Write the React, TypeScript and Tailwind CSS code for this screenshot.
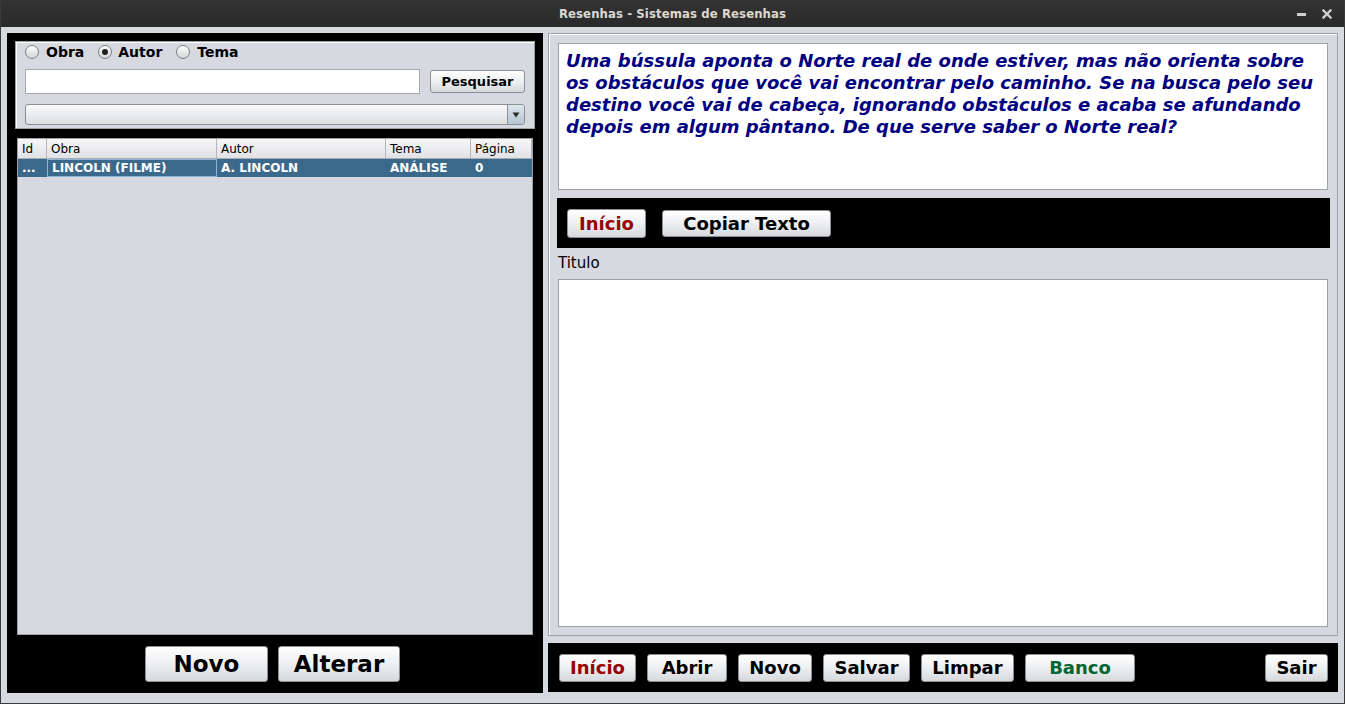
import React from "react";

const btn =
  "flex items-center justify-center rounded-[3px] border border-[#8c8f94] bg-linear-to-b from-[#ffffff] via-[#eeeff1] to-[#d6d8dc] shadow-[inset_0_1px_0_#ffffff] font-bold";

function Radio({ checked }: { checked?: boolean }) {
  return (
    <span className="relative flex h-[14px] w-[14px] items-center justify-center rounded-full border border-[#7d8086] bg-linear-to-b from-[#ffffff] to-[#d2d4d8]">
      {checked && <span className="h-[6px] w-[6px] rounded-full bg-[#222]" />}
    </span>
  );
}

export default function App() {
  const cols = [
    { w: "w-[29px]", h: "Id", v: "..." },
    { w: "w-[170px]", h: "Obra", v: "LINCOLN (FILME)" },
    { w: "w-[169px]", h: "Autor", v: "A. LINCOLN" },
    { w: "w-[85px]", h: "Tema", v: "ANÁLISE" },
    { w: "flex-1", h: "Página", v: "0" },
  ];
  const bottom = [
    { t: "Início", w: "w-[77px]", c: "text-[#990000]" },
    { t: "Abrir", w: "w-[80px]", c: "text-black" },
    { t: "Novo", w: "w-[74px]", c: "text-black" },
    { t: "Salvar", w: "w-[87px]", c: "text-black" },
    { t: "Limpar", w: "w-[93px]", c: "text-black" },
    { t: "Banco", w: "w-[110px]", c: "text-[#006633]" },
  ];
  return (
    <div className="flex h-[704px] w-[1345px] flex-col overflow-hidden border-x border-b border-[#3a3a3a] bg-[#d6d9df] font-['DejaVu_Sans',sans-serif]">
      {/* title bar */}
      <div className="relative flex h-[27px] shrink-0 items-center justify-center bg-linear-to-b from-[#333333] to-[#2a2a2a]">
        <span className="font-['DejaVu_Sans_Condensed','DejaVu_Sans',sans-serif] text-[13px] font-bold tracking-[0.1px] text-[#dcd8cf] [font-stretch:condensed]">
          Resenhas - Sistemas de Resenhas
        </span>
        <div className="absolute right-[12px] top-0 flex h-[27px] items-center gap-[16px] text-[#cfcfcf]">
          <span className="mt-[1px] h-[3px] w-[9px] bg-[#cfcfcf]" />
          <svg width="10" height="10" viewBox="0 0 10 10">
            <path d="M1.5 1.5 L8.5 8.5 M8.5 1.5 L1.5 8.5" stroke="#cfcfcf" strokeWidth="2.4" strokeLinecap="square" />
          </svg>
        </div>
      </div>

      {/* body */}
      <div className="flex flex-1 gap-[5px] pl-[6px] pr-[6px] pt-[6px]">
        {/* left */}
        <div className="flex h-[660px] w-[536px] flex-col bg-black px-[8px] pt-[8px]">
          <div className="flex h-[88px] w-[520px] flex-col border border-[#9ea1a6] bg-[#d6d9df] pl-[9px] pr-[8px] shadow-[inset_1px_1px_0_#ffffff]">
            <div className="mt-[0px] flex h-[20px] items-center text-[14px] font-bold text-black">
              <Radio />
              <span className="ml-[7px]">Obra</span>
              <span className="ml-[14px]"><Radio checked /></span>
              <span className="ml-[6px]">Autor</span>
              <span className="ml-[14px]"><Radio /></span>
              <span className="ml-[7px]">Tema</span>
            </div>
            <div className="mt-[7px] flex items-center">
              <div className="h-[25px] w-[395px] border border-[#a6a8ad] bg-white" />
              <div className={`${btn} ml-[10px] h-[23px] w-[95px] text-[13px] text-black`}>Pesquisar</div>
            </div>
            <div className="mt-[10px] flex h-[21px] w-[500px] overflow-hidden rounded-[3px] border border-[#8c8f94] bg-linear-to-b from-[#fbfbfc] to-[#dcdee2]">
              <div className="flex-1" />
              <div className="flex w-[17px] items-center justify-center border-l border-[#8c8f94] bg-linear-to-b from-[#dfe6ee] to-[#b7c4d2]">
                <svg width="8" height="6" viewBox="0 0 8 6"><path d="M0.5 0.5 H7.5 L4 5.5 Z" fill="#2a2a2a" /></svg>
              </div>
            </div>
          </div>

          {/* table */}
          <div className="mx-[2px] mt-[9px] flex h-[497px] flex-col border border-[#9ea1a6] bg-[#d6d9df]">
            <div className="flex h-[20px] border-b border-[#a9acb1] bg-linear-to-b from-[#f6f6f7] to-[#e1e2e5] text-[12px] text-black">
              {cols.map((c, i) => (
                <div key={i} className={`${c.w} flex items-center border-r border-[#b3b6bb] pl-[4px]`}>{c.h}</div>
              ))}
            </div>
            <div className="flex h-[18px] bg-[#3b698b] text-[12px] font-bold text-white">
              {cols.map((c, i) => (
                <div key={i} className={`${c.w} flex items-center pl-[4px] ${i === 1 ? "border border-[#8fb3d6]" : ""}`}>{c.v}</div>
              ))}
            </div>
          </div>

          <div className="mt-[11px] flex justify-center gap-[10px] pr-[5px]">
            <div className={`${btn} h-[36px] w-[123px] text-[23px] text-black`}>Novo</div>
            <div className={`${btn} h-[36px] w-[122px] text-[23px] text-black`}>Alterar</div>
          </div>
        </div>

        {/* right */}
        <div className="flex w-[790px] flex-col">
          <div className="flex h-[603px] flex-col border border-[#9ea1a6] bg-[#d6d9df] pl-[9px] pr-[8px] pt-[9px] shadow-[inset_1px_1px_0_#ffffff]">
            <div className="h-[147px] w-[770px] border border-[#9ea1a6] bg-white px-[7px] pt-[6px] text-[18px] font-bold italic leading-[22px] text-[#000080]">
              Uma bússula aponta o Norte real de onde estiver, mas não orienta sobre<br />
              os obstáculos que você vai encontrar pelo caminho. Se na busca pelo seu<br />
              destino você vai de cabeça, ignorando obstáculos e acaba se afundando<br />
              depois em algum pântano. De que serve saber o Norte real?
            </div>
            <div className="-ml-[1px] mt-[8px] flex h-[50px] w-[773px] items-center bg-black pl-[10px]">
              <div className={`${btn} h-[29px] w-[79px] text-[18px] text-[#990000]`}>Início</div>
              <div className={`${btn} ml-[16px] h-[27px] w-[169px] text-[18px] text-black`}>Copiar Texto</div>
            </div>
            <div className="mt-[6px] h-[18px] text-[15px] leading-[18px] text-black">Titulo</div>
            <div className="mt-[7px] h-[348px] w-[770px] border border-[#9ea1a6] bg-white" />
          </div>

          <div className="mt-[7px] flex h-[49px] items-center bg-black pl-[11px] pr-[10px]">
            <div className="flex gap-[11px]">
              {bottom.map((b) => (
                <div key={b.t} className={`${btn} h-[28px] ${b.w} text-[18px] ${b.c}`}>{b.t}</div>
              ))}
            </div>
            <div className="flex-1" />
            <div className={`${btn} h-[28px] w-[63px] text-[18px] text-black`}>Sair</div>
          </div>
        </div>
      </div>
    </div>
  );
}
